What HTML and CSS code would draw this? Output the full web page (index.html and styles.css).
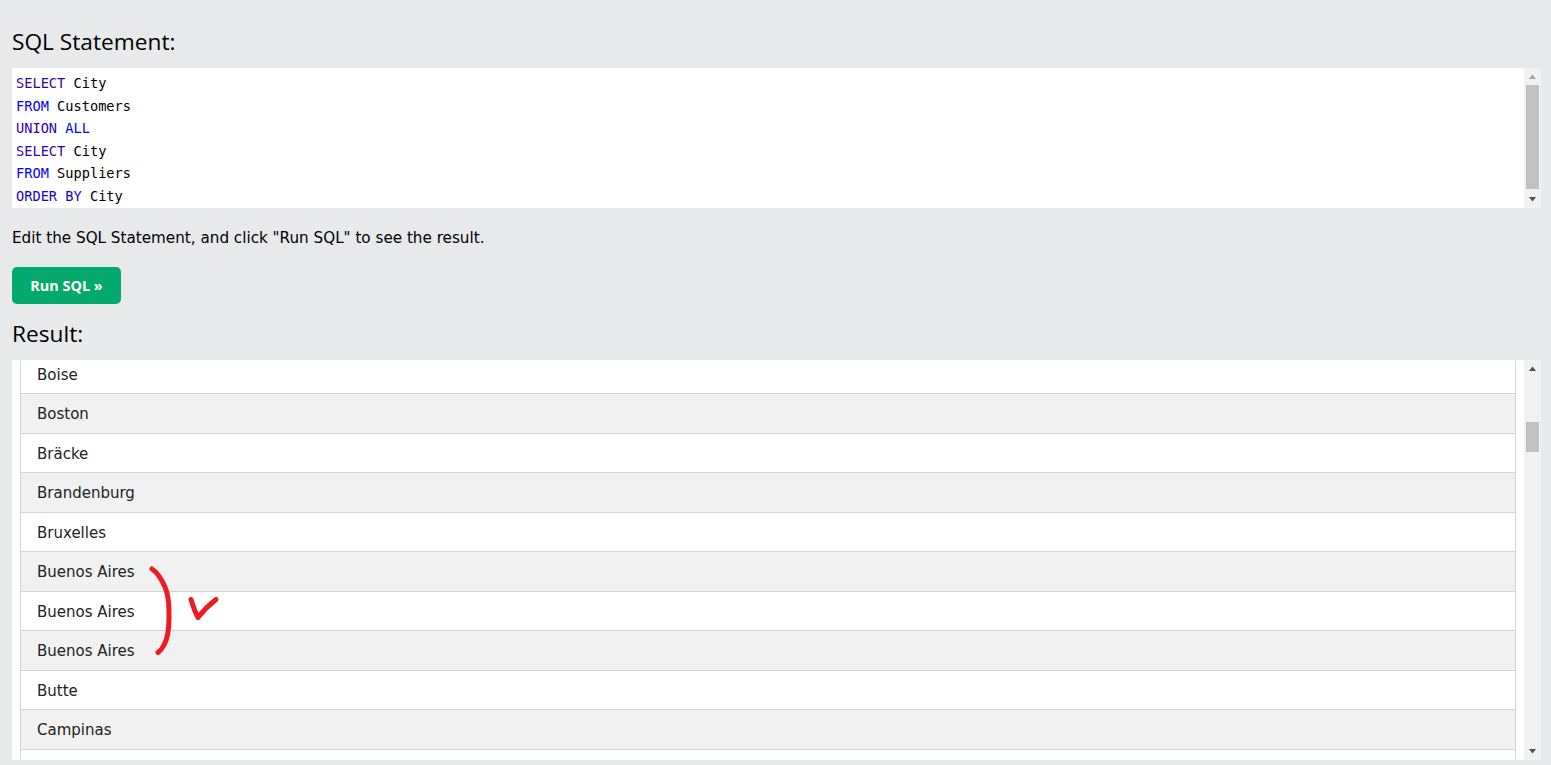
FILE: index.html
```html
<!DOCTYPE html>
<html lang="en">
<head>
    <meta charset="UTF-8">
    <title>SQL Tryit Editor</title>
    <link rel="stylesheet" href="styles.css">
</head>
<body>
    <div class="page">
        <h3 class="title">SQL Statement:</h3>
        <div class="panel code-panel">
            <div class="code">
                <div class="line"><span class="builtin">SELECT</span> City</div>
                <div class="line"><span class="kw">FROM</span> Customers</div>
                <div class="line"><span class="builtin">UNION</span> <span class="kw">ALL</span></div>
                <div class="line"><span class="builtin">SELECT</span> City</div>
                <div class="line"><span class="kw">FROM</span> Suppliers</div>
                <div class="line"><span class="order">ORDER BY</span> City</div>
            </div>
            <div class="scrollbar">
                <svg class="arrow" width="17" height="17" viewBox="0 0 17 17"><path class="arrow-off" d="M5 11h7L8.5 6.500z"/></svg>
                <div class="track code-track"><div class="thumb code-thumb"></div></div>
                <svg class="arrow" width="17" height="17" viewBox="0 0 17 17"><path d="M5 6h7l-3.500 4.500z"/></svg>
            </div>
        </div>
        <p class="hint">Edit the SQL Statement, and click "Run SQL" to see the result.</p>
        <button class="run-btn">Run SQL »</button>
        <h3 class="title result-title">Result:</h3>
        <div class="panel result-panel">
            <div class="result">
                <table class="cities">
                    <tr><td>Boise</td></tr>
                    <tr><td>Boston</td></tr>
                    <tr><td>Bräcke</td></tr>
                    <tr><td>Brandenburg</td></tr>
                    <tr><td>Bruxelles</td></tr>
                    <tr><td>Buenos Aires</td></tr>
                    <tr><td>Buenos Aires</td></tr>
                    <tr><td>Buenos Aires</td></tr>
                    <tr><td>Butte</td></tr>
                    <tr><td>Campinas</td></tr>
                    <tr><td></td></tr>
                </table>
            </div>
            <div class="scrollbar">
                <svg class="arrow" width="17" height="17" viewBox="0 0 17 17"><path d="M5 11h7L8.500 6.500z"/></svg>
                <div class="track result-track"><div class="thumb result-thumb"></div></div>
                <svg class="arrow" width="17" height="17" viewBox="0 0 17 17"><path d="M5 6h7l-3.500 4.500z"/></svg>
            </div>
        </div>
    </div>
    <!-- red pen marks on top of the screenshot -->
    <svg class="marks" viewBox="130 555 100 110">
        <path d="M152 569C158 573 162 580 165 587C169 596 169 606 169 618C169 630 168 638 164 645C162 649 160 651 158 652.500"/>
        <path d="M191 599.500C193 606 195 612 198 617.500C203 611 209 605 216 599.500"/>
    </svg>
</body>
</html>
```

FILE: styles.css
```css
html, body { margin: 0; height: 765px; overflow: hidden; background-color: #E7E9EB; }
.page { padding: 28px 10px 0 12px; }
.title { margin: 0; font-family: "Open Sans", sans-serif; font-size: 22.700px; font-weight: 400; line-height: 27px; color: #000; }
.panel { display: flex; background-color: #fff; }
.code-panel { height: 140px; margin-top: 13px; }
.code { flex: 1; padding: 4px 4px 0; font-family: "DejaVu Sans Mono", monospace; font-size: 13.650px; line-height: 22.500px; color: #000; overflow: hidden; }
.builtin { color: #30a; }
.kw { color: #00f; }
.order { color: #1a00cc; }
.scrollbar { display: flex; flex-direction: column; width: 17px; background-color: #f1f1f1; }
.arrow { display: block; flex: none; }
.arrow path { fill: #505050; }
.arrow .arrow-off { fill: #a3a3a3; }
.track { flex: 1; padding: 0 2px; }
.thumb { background-color: #c1c1c1; height: 104px; }
.result-track { padding-top: 45px; }
.result-thumb { height: 30px; }
.hint { margin: 20px 0 0; font-family: "DejaVu Sans", sans-serif; font-size: 15.200px; line-height: 20px; color: #000; }
.run-btn { display: block; width: 109px; height: 37px; margin-top: 19px; padding: 0; border: none; border-radius: 5px; background-color: #04AA6D; color: #fff; font-family: "Open Sans", sans-serif; font-size: 14.400px; font-weight: 700; cursor: pointer; }
.result-title { margin-top: 16px; }
.result-panel { height: 400px; margin-top: 13px; }
.result { flex: 1; padding: 0 8px; overflow: hidden; }
.cities { width: 100%; margin-top: -6px; border-collapse: collapse; font-family: "DejaVu Sans", sans-serif; font-size: 15px; color: #222; }
.cities td { height: 39.500px; padding: 2px 16px 0; box-sizing: border-box; border: 1px solid #d4d4d4; border-top: none; }
.cities tr:nth-child(even) td { background-color: #f1f1f1; }
.marks { position: absolute; left: 130px; top: 555px; width: 100px; height: 110px; }
.marks path { fill: none; stroke: #ed1c24; stroke-width: 5; stroke-linecap: round; stroke-linejoin: round; }
```
